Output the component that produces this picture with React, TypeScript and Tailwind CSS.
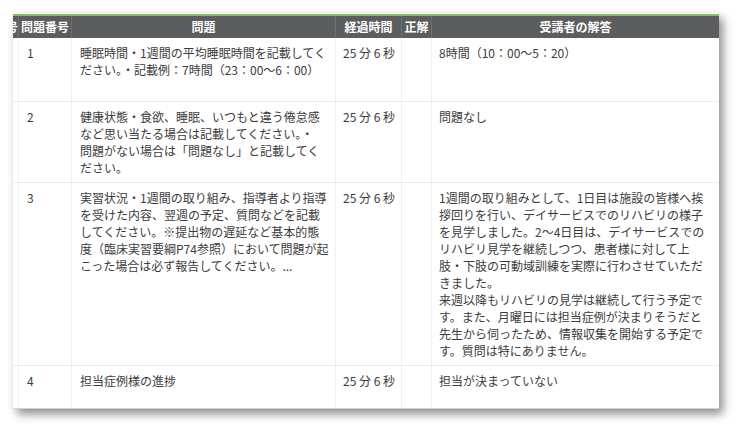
import React from "react";

const cols = "grid grid-cols-[6px_53px_264px_66px_30px_287px]";

const rows: { no: string; q: string[]; t: string; a: string[]; h: string }[] = [
  {
    no: "1",
    q: ["睡眠時間・1週間の平均睡眠時間を記載してく", "ださい。・記載例：7時間（23：00～6：00）"],
    t: "25 分 6 秒",
    a: ["8時間（10：00～5：20）"],
    h: "h-[64px]",
  },
  {
    no: "2",
    q: [
      "健康状態・食欲、睡眠、いつもと違う倦怠感",
      "など思い当たる場合は記載してください。・",
      "問題がない場合は「問題なし」と記載してく",
      "ださい。",
    ],
    t: "25 分 6 秒",
    a: ["問題なし"],
    h: "h-[81px]",
  },
  {
    no: "3",
    q: [
      "実習状況・1週間の取り組み、指導者より指導",
      "を受けた内容、翌週の予定、質問などを記載",
      "してください。※提出物の遅延など基本的態",
      "度（臨床実習要綱P74参照）において問題が起",
      "こった場合は必ず報告してください。...",
    ],
    t: "25 分 6 秒",
    a: [
      "1週間の取り組みとして、1日目は施設の皆様へ挨",
      "拶回りを行い、デイサービスでのリハビリの様子",
      "を見学しました。2～4日目は、デイサービスでの",
      "リハビリ見学を継続しつつ、患者様に対して上",
      "肢・下肢の可動域訓練を実際に行わさせていただ",
      "きました。",
      "来週以降もリハビリの見学は継続して行う予定で",
      "す。また、月曜日には担当症例が決まりそうだと",
      "先生から伺ったため、情報収集を開始する予定で",
      "す。質問は特にありません。",
    ],
    h: "h-[183px]",
  },
  {
    no: "4",
    q: ["担当症例様の進捗"],
    t: "25 分 6 秒",
    a: ["担当が決まっていない"],
    h: "h-[60px]",
  },
];

function Lines({ lines }: { lines: string[] }) {
  return (
    <>
      {lines.map((l, i) => (
        <div key={i} className="whitespace-nowrap">
          {l}
        </div>
      ))}
    </>
  );
}

export default function App() {
  return (
    <div
      className="w-[742px] h-[433px] bg-white overflow-hidden pl-[13px] pt-[13px]"
      style={{ fontFamily: '"Noto Sans CJK JP", "Noto Sans", sans-serif' }}
    >
      <div className="w-[706px] h-[396px] bg-white border-t border-white shadow-[4px_5px_9px_rgba(0,0,0,0.45)] overflow-hidden border-b border-b-[#cfd8c8]">
        <div className="h-[2px] bg-[#86bf5e]" />
        <div className={`${cols} h-[22px] bg-[#5c5d5e] text-white text-[12px] font-bold leading-[22px]`}>
          <div className="overflow-hidden flex justify-end border-r border-[#6e6f70]">
            <span className="whitespace-nowrap">番号</span>
          </div>
          <div className="text-center border-r border-[#6e6f70] whitespace-nowrap">問題番号</div>
          <div className="text-center border-r border-[#6e6f70]">問題</div>
          <div className="text-center border-r border-[#6e6f70]">経過時間</div>
          <div className="text-center border-r border-[#6e6f70]">正解</div>
          <div className="text-center">受講者の解答</div>
        </div>
        {rows.map((r) => (
          <div
            key={r.no}
            className={`${cols} ${r.h} border-b border-[#ebebeb] text-[12px] leading-[17px] text-[#3c3c3c]`}
          >
            <div className="border-r border-[#f0f0f0]" />
            <div className="border-r border-[#f0f0f0] px-[8px] py-[6px]">{r.no}</div>
            <div className="border-r border-[#f0f0f0] px-[8px] py-[6px]">
              <Lines lines={r.q} />
            </div>
            <div className="border-r border-[#f0f0f0] px-[7px] py-[6px] whitespace-nowrap">{r.t}</div>
            <div className="border-r border-[#f0f0f0]" />
            <div className="px-[7px] py-[6px]">
              <Lines lines={r.a} />
            </div>
          </div>
        ))}
      </div>
    </div>
  );
}
